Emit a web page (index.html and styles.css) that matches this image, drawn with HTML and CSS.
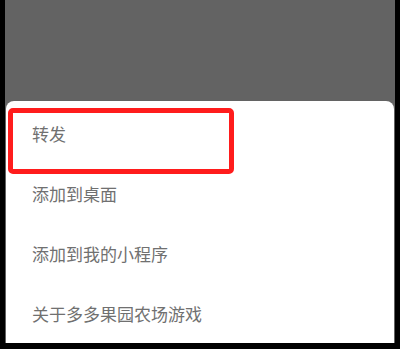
FILE: index.html
```html
<!DOCTYPE html>
<html lang="zh-CN">
<head>
<meta charset="utf-8">
<link rel="stylesheet" href="styles.css">
</head>
<body>
<div class="frame">
  <div class="sheet">
    <div class="row">转发</div>
    <div class="row">添加到桌面</div>
    <div class="row">添加到我的小程序</div>
    <div class="row">关于多多果园农场游戏</div>
    <div class="highlight"></div>
  </div>
</div>
</body>
</html>
```
FILE: styles.css
```css
html, body {
  margin: 0;
  padding: 0;
  background: #000;
}
body {
  width: 400px;
  height: 349px;
  overflow: hidden;
  font-family: "Noto Sans CJK SC", "Noto Sans", sans-serif;
}
.frame {
  margin-left: 5px;
  width: 390px;
  height: 343px;
  background: #636363;
  display: flex;
  flex-direction: column;
  justify-content: flex-end;
}
.sheet {
  position: relative;
  margin: 0 1px;
  height: 242px;
  box-sizing: border-box;
  padding-top: 2px;
  background: #fff;
  border-radius: 8px 8px 0 0;
}
.row {
  height: 60px;
  display: flex;
  align-items: center;
  padding-left: 26px;
  font-size: 17px;
  color: #707070;
}
.highlight {
  position: absolute;
  left: 2px;
  top: 7px;
  width: 226px;
  height: 66px;
  box-sizing: border-box;
  border: 5px solid #ff1c1c;
  border-radius: 5px;
}
```
